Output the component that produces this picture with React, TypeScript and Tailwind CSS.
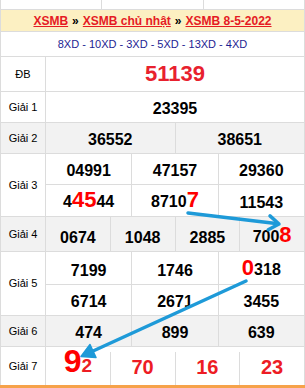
import React from "react";

const B = "border-[#dcdcdc]";

function Label({ children }: { children: React.ReactNode }) {
  return (
    <div className="w-[45px] shrink-0 border-r border-[#dcdcdc] flex items-center justify-center text-[11px] text-black">
      {children}
    </div>
  );
}

function Cell({ children, last }: { children: React.ReactNode; last?: boolean }) {
  return (
    <div
      className={
        "flex-1 flex items-end justify-center pb-[5px] text-[16px] font-bold text-black leading-none " +
        (last ? "" : "border-r border-[#dcdcdc]")
      }
    >
      {children}
    </div>
  );
}

function Line({ items, h }: { items: React.ReactNode[]; h: string }) {
  return (
    <div className={"flex " + h}>
      {items.map((it, i) => (
        <Cell key={i} last={i === items.length - 1}>
          {it}
        </Cell>
      ))}
    </div>
  );
}

const R = ({ children, size = "text-[22px]" }: { children: React.ReactNode; size?: string }) => (
  <span className={"text-[#ff0000] " + size}>{children}</span>
);

export default function App() {
  return (
    <div className="relative w-[305px] h-[388px] overflow-hidden bg-white font-['Liberation_Sans',Arial,sans-serif]">
      <div className={"w-[305px] h-[385px] border-l border-r " + B + " flex flex-col"}>
        {/* partial top row */}
        <div className={"h-[10px] flex border-b " + B}>
          <div className={"flex-1 border-r " + B}></div>
          <div className={"flex-1 border-r " + B}></div>
          <div className="flex-1"></div>
        </div>
        {/* header */}
        <div className={"h-[22px] bg-[#fcf0c2] border-b " + B + " flex items-center justify-center text-[12px] font-bold"}>
          <span className="text-[#e51b24] underline">XSMB</span>
          <span className="mx-[4px] text-black">»</span>
          <span className="text-[#e51b24] underline">XSMB chủ nhật</span>
          <span className="mx-[4px] text-black">»</span>
          <span className="text-[#e51b24] underline">XSMB 8-5-2022</span>
        </div>
        {/* XD */}
        <div className={"h-[25px] border-b " + B + " flex items-center justify-center text-[11px] text-[#1d1d92]"}>
          8XD - 10XD - 3XD - 5XD - 13XD - 4XD
        </div>
        {/* ĐB */}
        <div className={"h-[35px] border-b " + B + " flex"}>
          <Label>ĐB</Label>
          <div className="flex-1 flex items-center justify-center text-[22px] font-bold text-[#e8212e] leading-none">
            51139
          </div>
        </div>
        {/* Giải 1 */}
        <div className={"h-[31px] border-b " + B + " flex"}>
          <Label>Giải 1</Label>
          <div className="flex-1 flex flex-col">
            <Line h="h-[30px]" items={["23395"]} />
          </div>
        </div>
        {/* Giải 2 */}
        <div className={"h-[31px] border-b " + B + " flex bg-[#f2f2f2]"}>
          <Label>Giải 2</Label>
          <div className="flex-1 flex flex-col">
            <Line h="h-[30px]" items={["36552", "38651"]} />
          </div>
        </div>
        {/* Giải 3 */}
        <div className={"h-[63px] border-b " + B + " flex"}>
          <Label>Giải 3</Label>
          <div className="flex-1 flex flex-col">
            <div className={"border-b " + B}>
              <Line h="h-[30px]" items={["04991", "47157", "29360"]} />
            </div>
            <Line
              h="h-[31px]"
              items={[
                <span className="flex items-baseline">
                  4<R>45</R>44
                </span>,
                <span className="flex items-baseline">
                  8710<R>7</R>
                </span>,
                "11543",
              ]}
            />
          </div>
        </div>
        {/* Giải 4 */}
        <div className={"h-[35px] border-b " + B + " flex bg-[#f2f2f2]"}>
          <Label>Giải 4</Label>
          <div className="flex-1 flex flex-col">
            <Line
              h="h-[34px]"
              items={[
                "0674",
                "1048",
                "2885",
                <span className="flex items-baseline">
                  700<R>8</R>
                </span>,
              ]}
            />
          </div>
        </div>
        {/* Giải 5 */}
        <div className={"h-[64px] border-b " + B + " flex"}>
          <Label>Giải 5</Label>
          <div className="flex-1 flex flex-col">
            <div className={"border-b " + B}>
              <Line
                h="h-[32px]"
                items={[
                  "7199",
                  "1746",
                  <span className="flex items-baseline">
                    <R>0</R>318
                  </span>,
                ]}
              />
            </div>
            <Line h="h-[30px]" items={["6714", "2671", "3455"]} />
          </div>
        </div>
        {/* Giải 6 */}
        <div className={"h-[31px] border-b " + B + " flex bg-[#f2f2f2]"}>
          <Label>Giải 6</Label>
          <div className="flex-1 flex flex-col">
            <Line h="h-[30px]" items={["474", "899", "639"]} />
          </div>
        </div>
        {/* Giải 7 */}
        <div className="h-[38px] flex">
          <Label>Giải 7</Label>
          <div className="flex-1 flex">
            {[
              <span className="flex items-baseline">
                <span className="text-[32px] text-[#ff0000]">9</span>
                <span className="text-[19px] text-[#ed1c24]">2</span>
              </span>,
              "70",
              "16",
              "23",
            ].map((v, i) => (
              <div
                key={i}
                className={
                  "flex-1 flex items-end justify-center pb-[8px] text-[20px] font-bold text-[#ed1c24] leading-none " +
                  (i < 3 ? "border-r border-[#dcdcdc] mt-[5px]" : "mt-[5px]")
                }
              >
                {v}
              </div>
            ))}
          </div>
        </div>
      </div>
      <div className="h-[3px] bg-[#f6a24a]"></div>

      {/* arrows overlay */}
      <svg className="absolute left-0 top-0 pointer-events-none" width="305" height="388" viewBox="0 0 305 388">
        <g stroke="#1e9ad8" strokeWidth="3.5" strokeLinecap="round" strokeLinejoin="round" fill="none">
          <line x1="188" y1="213" x2="276" y2="223.5" />
          <polyline points="270,215.9 279,224 268.2,229.7" />
          <line x1="246" y1="281" x2="92" y2="351.5" />
        </g>
        <polygon points="81,356.5 90,344.5 96,357.5" fill="#1e9ad8" stroke="#1e9ad8" strokeWidth="1.5" strokeLinejoin="round" />
      </svg>
    </div>
  );
}
